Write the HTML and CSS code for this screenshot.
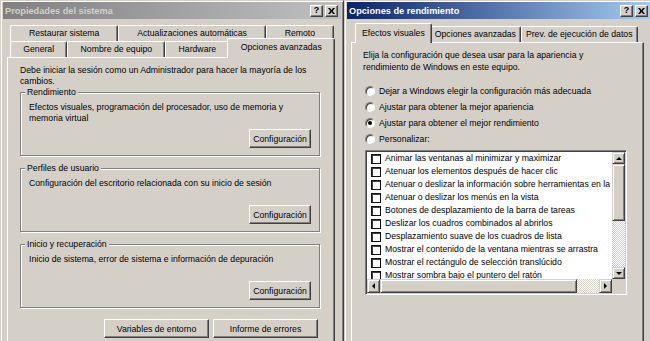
FILE: index.html
```html
<!DOCTYPE html>
<html>
<head>
<meta charset="utf-8">
<title>Propiedades del sistema</title>
<link rel="stylesheet" href="styles.css">
</head>

<body>
<div id="desktop">
	<div class="win win-sys">
		<div class="titlebar inactive">
			<span class="title">Propiedades del sistema</span>
			<div class="caption-btns">
				<span class="cbtn">?</span>
				<span class="cbtn"><svg width="7" height="6" viewBox="0 0 7 6"><path d="M0 0H2L3.5 2L5 0H7L4.6 3L7 6H5L3.5 4L2 6H0L2.4 3Z" fill="#000"/></svg></span>
			</div>
		</div>
		<div class="tabs multi">
			<div class="tabrow">
				<div class="tab">Restaurar sistema</div>
				<div class="tab">Actualizaciones automáticas</div>
				<div class="tab">Remoto</div>
			</div>
			<div class="tabrow front">
				<div class="tab">General</div>
				<div class="tab">Nombre de equipo</div>
				<div class="tab">Hardware</div>
				<div class="tab active">Opciones avanzadas</div>
			</div>
		</div>
		<div class="panel">
			<p class="note">Debe iniciar la sesión como un Administrador para hacer la mayoría de los<br>cambios.</p>
			<div class="group">
				<div class="group-label">Rendimiento</div>
				<p class="group-text">Efectos visuales, programación del procesador, uso de memoria y<br>memoria virtual</p>
				<button class="btn">Configuración</button>
			</div>
			<div class="group">
				<div class="group-label">Perfiles de usuario</div>
				<p class="group-text">Configuración del escritorio relacionada con su inicio de sesión</p>
				<button class="btn">Configuración</button>
			</div>
			<div class="group">
				<div class="group-label">Inicio y recuperación</div>
				<p class="group-text">Inicio de sistema, error de sistema e información de depuración</p>
				<button class="btn">Configuración</button>
			</div>
			<div class="footer-btns">
				<button class="btn wide">Variables de entorno</button>
				<button class="btn wide">Informe de errores</button>
			</div>
		</div>
	</div>

	<div class="win win-perf">
		<div class="titlebar active">
			<span class="title">Opciones de rendimiento</span>
			<div class="caption-btns">
				<span class="cbtn">?</span>
				<span class="cbtn"><svg width="7" height="6" viewBox="0 0 7 6"><path d="M0 0H2L3.5 2L5 0H7L4.6 3L7 6H5L3.5 4L2 6H0L2.4 3Z" fill="#000"/></svg></span>
			</div>
		</div>
		<div class="tabs single">
			<div class="tabrow">
				<div class="tab active">Efectos visuales</div>
				<div class="tab">Opciones avanzadas</div>
				<div class="tab">Prev. de ejecución de datos</div>
			</div>
		</div>
		<div class="panel">
			<p class="note">Elija la configuración que desea usar para la apariencia y<br>rendimiento de Windows en este equipo.</p>
			<div class="radios">
				<div class="radio-row"><span class="radio"></span>Dejar a Windows elegir la configuración más adecuada</div>
				<div class="radio-row"><span class="radio"></span>Ajustar para obtener la mejor apariencia</div>
				<div class="radio-row"><span class="radio checked"></span>Ajustar para obtener el mejor rendimiento</div>
				<div class="radio-row"><span class="radio"></span>Personalizar:</div>
			</div>
			<div class="listbox">
				<div class="list">
					<div class="item"><span class="check"></span>Animar las ventanas al minimizar y maximizar</div>
					<div class="item"><span class="check"></span>Atenuar los elementos después de hacer clic</div>
					<div class="item"><span class="check"></span><span class="clip">Atenuar o deslizar la información sobre herramientas en la</span></div>
					<div class="item"><span class="check"></span>Atenuar o deslizar los menús en la vista</div>
					<div class="item"><span class="check"></span>Botones de desplazamiento de la barra de tareas</div>
					<div class="item"><span class="check"></span>Deslizar los cuadros combinados al abrirlos</div>
					<div class="item"><span class="check"></span>Desplazamiento suave de los cuadros de lista</div>
					<div class="item"><span class="check"></span>Mostrar el contenido de la ventana mientras se arrastra</div>
					<div class="item"><span class="check"></span>Mostrar el rectángulo de selección translúcido</div>
					<div class="item"><span class="check"></span>Mostrar sombra bajo el puntero del ratón</div>
				</div>
				<div class="vscroll">
					<div class="sbtn"><span class="arrow up"></span></div>
					<div class="thumb v"></div>
					<div class="track"></div>
					<div class="sbtn"><span class="arrow down"></span></div>
				</div>
				<div class="hscroll">
					<div class="sbtn"><span class="arrow left"></span></div>
					<div class="thumb h"></div>
					<div class="track"></div>
					<div class="sbtn"><span class="arrow right"></span></div>
				</div>
				<div class="corner"></div>
			</div>
		</div>
	</div>
</div>
</body>
</html>
```

FILE: styles.css
```css
html, body {
	margin: 0px;
	padding: 0px;
}
body {
	width: 650px;
	height: 341px;
	overflow: hidden;
	background: #d4d0c8;
	font-family: "Liberation Sans", Arial, sans-serif;
	font-size: 8.7px;
	color: #000;
}
p {
	margin: 0px;
}
#desktop {
	display: flex;
	align-items: flex-start;
	height: 341px;
	overflow: hidden;
}

/* ventanas (recortadas por abajo) */
.win {
	flex: none;
	box-sizing: border-box;
	height: 341px;
	padding: 1px 2px 0px 2px;
	display: flex;
	flex-direction: column;
	background: #d4d0c8;
	border: 1px solid;
	border-bottom: none;
	border-color: #d4d0c8 #404040 #404040 #d4d0c8;
	box-shadow: inset 1px 1px #fff, inset -1px 0px #808080;
}
.win-sys {
	width: 344px;
}
.win-perf {
	width: 306px;
	border-right: none;
	padding-right: 0px;
	box-shadow: inset 1px 1px #fff;
}
.titlebar {
	flex: none;
	height: 17px;
	display: flex;
	align-items: center;
	justify-content: space-between;
	padding: 0px 3px 0px 2px;
	font-size: 9.2px;
	font-weight: bold;
}
.win-perf .titlebar {
	padding-right: 2px;
}
.titlebar.inactive {
	background: linear-gradient(to right, #808080, #c0c0c0);
	color: #d4d0c8;
}
.titlebar.active {
	background: linear-gradient(to right, #0a246a, #a6caf0);
	color: #fff;
}
.caption-btns {
	display: flex;
	gap: 2px;
}
.cbtn {
	box-sizing: border-box;
	width: 13px;
	height: 12px;
	display: flex;
	align-items: center;
	justify-content: center;
	background: #d4d0c8;
	border: 1px solid;
	border-color: #fff #404040 #404040 #fff;
	box-shadow: inset -1px -1px #808080;
	color: #000;
	font-size: 9px;
	line-height: 1;
}

/* pestañas */
.tabs {
	flex: none;
}
.tabs.multi {
	margin: 6px 7px 0px 7px;
}
.tabs.single {
	margin: 7px 0px 0px 10px;
}
.tabrow {
	display: flex;
	align-items: flex-end;
	height: 16px;
}
.tabrow.front {
	margin-right: 1px;
}
.tab {
	box-sizing: border-box;
	height: 16px;
	padding: 0px 4px;
	border: 1px solid;
	border-color: #fff #404040 transparent #fff;
	border-bottom: none;
	border-radius: 2px 2px 0px 0px;
	box-shadow: inset -1px 0px #808080;
	line-height: 14px;
	text-align: center;
	white-space: nowrap;
	background: #d4d0c8;
}
.tabs.multi .tab {
	flex: 1 1 auto;
}
.tab.active {
	height: 20px;
	margin: 0px -2px -1px -2px;
	padding-top: 1px;
	position: relative;
	z-index: 1;
}
.tabs.single .tab.active {
	padding-top: 2px;
	padding-left: 6px;
	padding-right: 6px;
}

/* página de la pestaña */
.panel {
	flex: 1;
	box-sizing: border-box;
	border: 1px solid;
	border-bottom: none;
	border-color: #fff #404040 #404040 #fff;
	box-shadow: inset -1px 0px #808080;
	line-height: 11px;
}
.win-sys .panel {
	margin: 0px 6px 0px 4px;
	padding: 7px 14px 0px 12px;
}
.win-perf .panel {
	margin: 0px 6px 0px 4px;
	padding: 6px 0px 0px 11px;
}
.note {
	white-space: nowrap;
}
.win-perf .note {
	line-height: 12px;
}

/* grupos */
.group {
	box-sizing: border-box;
	height: 64px;
	margin-top: 12px;
	padding: 0px 8px 7px 8px;
	display: flex;
	flex-direction: column;
	border: 1px solid #808080;
	box-shadow: inset 1px 1px #fff, 1px 1px #fff;
}
.note + .group {
	margin-top: 5px;
}
.group-label {
	align-self: flex-start;
	margin: -6px 0px 0px -4px;
	padding: 0px 2px;
	background: #d4d0c8;
}
.group-text {
	margin-top: 4px;
	white-space: nowrap;
}
.btn {
	box-sizing: border-box;
	height: 19px;
	padding: 0px;
	font-family: inherit;
	font-size: 8.7px;
	color: #000;
	background: #d4d0c8;
	border: 1px solid;
	border-color: #fff #404040 #404040 #fff;
	box-shadow: inset -1px -1px #808080;
	border-radius: 0px;
}
.group .btn {
	width: 62px;
	margin-top: auto;
	align-self: flex-end;
}
.footer-btns {
	display: flex;
	justify-content: flex-end;
	gap: 4px;
	margin-top: 11px;
	padding-right: 2px;
}
.btn.wide {
	width: 105px;
}

/* opciones */
.radios {
	margin: 10px 0px 0px 2px;
}
.radio-row {
	height: 16px;
	display: flex;
	align-items: center;
	white-space: nowrap;
}
.radio {
	box-sizing: border-box;
	width: 10px;
	height: 10px;
	margin-right: 4px;
	border-radius: 50%;
	border: 1px solid;
	border-color: #808080 #fff #fff #808080;
	box-shadow: inset 1px 1px #404040;
	background: #fff;
	display: flex;
	align-items: center;
	justify-content: center;
}
.radio.checked::after {
	content: "";
	width: 4px;
	height: 4px;
	border-radius: 50%;
	background: #000;
}

/* lista con casillas */
.listbox {
	box-sizing: border-box;
	width: 262px;
	height: 145px;
	margin: 3px 0px 0px 2px;
	border: 1px solid;
	border-color: #808080 #fff #fff #808080;
	box-shadow: inset 1px 1px #404040, inset -1px -1px #d4d0c8;
	padding: 1px;
	display: grid;
	grid-template-columns: 1fr 13px;
	grid-template-rows: 1fr 14px;
}
.list {
	background: #fff;
	overflow: hidden;
	padding-left: 4px;
}
.item {
	height: 13px;
	display: flex;
	align-items: center;
	white-space: nowrap;
}
.clip {
	overflow: hidden;
	min-width: 0;
}
.check {
	flex: none;
	box-sizing: border-box;
	width: 10px;
	height: 10px;
	margin-right: 4px;
	border: 1px solid #101010;
	box-shadow: inset 1px 1px #404040;
	background: #fff;
}
.vscroll {
	display: flex;
	flex-direction: column;
}
.hscroll {
	display: flex;
}
.sbtn, .thumb {
	box-sizing: border-box;
	flex: none;
	background: #d4d0c8;
	border: 1px solid;
	border-color: #d4d0c8 #404040 #404040 #d4d0c8;
	box-shadow: inset 1px 1px #fff, inset -1px -1px #808080;
	display: flex;
	align-items: center;
	justify-content: center;
}
.vscroll .sbtn {
	height: 12px;
}
.hscroll .sbtn {
	width: 13px;
}
.thumb.v {
	height: 57px;
}
.thumb.h {
	width: 197px;
}
.track {
	flex: 1;
	background: repeating-conic-gradient(#fff 0% 25%, #d4d0c8 0% 50%) 0 0 / 2px 2px;
}
.corner {
	background: #d4d0c8;
}
.arrow {
	width: 0px;
	height: 0px;
	border: 3px solid transparent;
}
.arrow.up {
	border-bottom-color: #000;
	border-top-width: 0px;
}
.arrow.down {
	border-top-color: #000;
	border-bottom-width: 0px;
}
.arrow.left {
	border-right-color: #000;
	border-left-width: 0px;
}
.arrow.right {
	border-left-color: #000;
	border-right-width: 0px;
}
```
